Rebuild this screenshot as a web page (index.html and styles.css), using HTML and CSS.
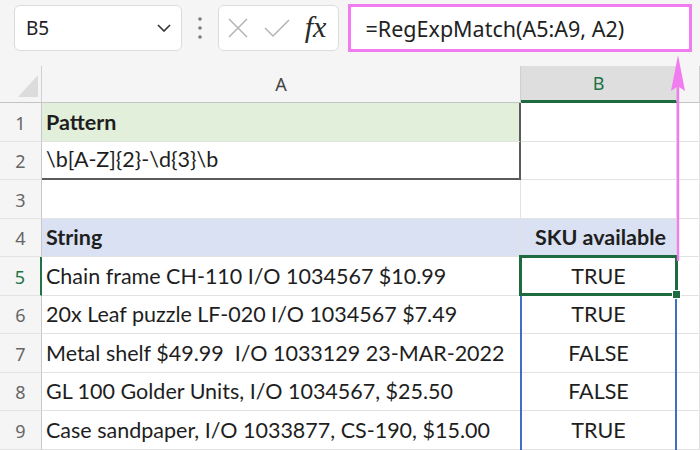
FILE: index.html
```html
<!DOCTYPE html>
<html lang="en">
<head>
  <meta charset="UTF-8">
  <title>RegExpMatch</title>
  <link rel="stylesheet" href="styles.css">
</head>
<body>
  <div class="toolbar">
    <div class="namebox">
      <span>B5</span>
      <svg class="chev" width="14" height="8" viewBox="0 0 14 8"><path d="M1 1 L7 7 L13 1" fill="none" stroke="#333" stroke-width="1.6"/></svg>
    </div>
    <svg class="dots" width="6" height="24" viewBox="0 0 6 24"><circle cx="3" cy="3" r="1.8" fill="#7a7a7a"/><circle cx="3" cy="12" r="1.8" fill="#7a7a7a"/><circle cx="3" cy="21" r="1.8" fill="#7a7a7a"/></svg>
    <div class="fxbox">
      <svg width="22" height="22" viewBox="0 0 22 22"><path d="M2 2 L20 20 M20 2 L2 20" stroke="#b4b4b4" stroke-width="1.5" fill="none"/></svg>
      <svg width="28" height="22" viewBox="0 0 28 22"><path d="M2 11 L10 19 L26 3" stroke="#b4b4b4" stroke-width="1.5" fill="none"/></svg>
      <span class="fx">fx</span>
    </div>
    <div class="formula">=RegExpMatch(A5:A9, A2)</div>
  </div>

  <div class="sheet">
    <div class="corner"><div class="tri"></div></div>
    <div class="colhead">A</div>
    <div class="colhead sel">B</div>
    <div class="colhead"></div>

    <div class="rowhead">1</div>
    <div class="cell green bold boxr">Pattern</div>
    <div class="cell"></div>
    <div class="cell"></div>

    <div class="rowhead">2</div>
    <div class="cell boxr boxb">\b[A-Z]{2}-\d{3}\b</div>
    <div class="cell"></div>
    <div class="cell"></div>

    <div class="rowhead">3</div>
    <div class="cell"></div>
    <div class="cell"></div>
    <div class="cell"></div>

    <div class="rowhead">4</div>
    <div class="cell blue bold">String</div>
    <div class="cell blue bold right">SKU available</div>
    <div class="cell"></div>

    <div class="rowhead active">5</div>
    <div class="cell">Chain frame CH-110 I/O 1034567 $10.99</div>
    <div class="cell center anchor">
      TRUE
      <div class="spill"></div>
      <div class="current"></div>
    </div>
    <div class="cell"></div>

    <div class="rowhead">6</div>
    <div class="cell">20x Leaf puzzle LF-020 I/O 1034567 $7.49</div>
    <div class="cell center">TRUE</div>
    <div class="cell"></div>

    <div class="rowhead">7</div>
    <div class="cell">Metal shelf $49.99&nbsp; I/O 1033129 23-MAR-2022</div>
    <div class="cell center">FALSE</div>
    <div class="cell"></div>

    <div class="rowhead">8</div>
    <div class="cell">GL 100 Golder Units, I/O 1034567, $25.50</div>
    <div class="cell center">FALSE</div>
    <div class="cell"></div>

    <div class="rowhead">9</div>
    <div class="cell">Case sandpaper, I/O 1033877, CS-190, $15.00</div>
    <div class="cell center">TRUE</div>
    <div class="cell"></div>
  </div>

  <svg class="arrow" width="20" height="206" viewBox="0 0 20 206">
    <path d="M10 0 L17 36 L11.2 32 L11.2 206 L8.8 206 L8.8 32 L3 36 Z" fill="#f07cf0"/>
  </svg>
</body>
</html>
```

FILE: styles.css
```css
body {
  margin: 0;
  width: 700px;
  height: 450px;
  overflow: hidden;
  background-color: #f5f5f5;
  font-family: Lato, 'Noto Sans', sans-serif;
  color: #1e1e1e;
  position: relative;
}

/* formula bar */
.toolbar {
  height: 66px;
  display: flex;
  align-items: flex-start;
  padding: 5px 8px 0 14px;
  box-sizing: border-box;
}
.namebox {
  width: 168px;
  height: 46px;
  box-sizing: border-box;
  background: white;
  border: 1px solid #dcdcdc;
  border-radius: 6px;
  display: flex;
  align-items: center;
  justify-content: space-between;
  padding: 0 10px 0 11px;
  font-family: 'Noto Sans', sans-serif;
  font-size: 19px;
  color: #222;
}
.dots {
  margin: 11px 15px 0 15px;
}
.fxbox {
  width: 121px;
  height: 46px;
  box-sizing: border-box;
  background: white;
  border: 1px solid #dcdcdc;
  border-radius: 6px;
  display: flex;
  align-items: center;
  gap: 14px;
  padding-left: 8px;
}
.fx {
  font-family: 'Liberation Serif', serif;
  font-style: italic;
  font-size: 30px;
  color: #2a2a2a;
  margin-left: 0;
  margin-top: -2px;
}
.formula {
  margin-left: 9px;
  margin-top: -1px;
  width: 345px;
  height: 48px;
  box-sizing: border-box;
  background: white;
  border: 3px solid #f07cf0;
  display: flex;
  align-items: center;
  padding-left: 15px;
  font-family: 'Noto Sans', sans-serif;
  font-size: 21.5px;
  color: #222;
}

/* grid */
.sheet {
  display: grid;
  grid-template-columns: 42px 479px 156px 1fr;
  grid-template-rows: 37px repeat(9, 38.5px);
  background: white;
}
.corner {
  background: #f5f5f5;
  border-right: 1px solid #d0d0d0;
  border-bottom: 1px solid #c4c4c4;
  display: flex;
  justify-content: flex-end;
  align-items: flex-end;
  padding: 0 3px 5px 0;
}
.tri {
  width: 0;
  height: 0;
  border-left: 20px solid transparent;
  border-bottom: 22px solid #dcdcdc;
}
.colhead {
  background: #f5f5f5;
  border-right: 1px solid #d0d0d0;
  border-bottom: 1px solid #c4c4c4;
  display: flex;
  align-items: center;
  justify-content: center;
  font-family: 'Noto Sans', sans-serif;
  font-size: 18px;
  color: #444;
}
.colhead.sel {
  background: #dedede;
  color: #217346;
  border-bottom: 3px solid #1d6b3e;
}
.rowhead {
  background: #f5f5f5;
  border-right: 1px solid #c8c8c8;
  border-bottom: 1px solid #e2e2e2;
  display: flex;
  align-items: flex-end;
  justify-content: center;
  padding-bottom: 6px;
  box-sizing: border-box;
  font-family: 'Noto Sans', sans-serif;
  font-size: 18px;
  color: #666;
}
.rowhead.active {
  color: #217346;
  border-right: 2px solid #217346;
}
.cell {
  border-right: 1px solid #e2e2e2;
  border-bottom: 1px solid #e2e2e2;
  display: flex;
  align-items: flex-end;
  padding: 0 4px 6px 4px;
  box-sizing: border-box;
  font-size: 21.5px;
  white-space: nowrap;
}
.bold { font-weight: bold; }
.right { justify-content: flex-end; padding-right: 10px; }
.center { justify-content: center; }
.green { background: #e2efda; }
.blue { background: #d9e1f2; }
.boxr { border-right: 2px solid #5b5b5b; }
.boxb { border-bottom: 2px solid #5b5b5b; }

/* selection overlays on B5 */
.anchor {
  position: relative;
}
.spill {
  position: absolute;
  left: -1px;
  right: -1px;
  top: -1px;
  height: 193px;
  border: 2px solid #3f6fc4;
  z-index: 1;
}
.current {
  position: absolute;
  left: -2px;
  right: -2px;
  top: -2px;
  bottom: -1px;
  border: 3px solid #1d6b3e;
  z-index: 2;
}
.current::after {
  content: '';
  position: absolute;
  right: -6px;
  bottom: -6px;
  width: 7px;
  height: 7px;
  background: #1d6b3e;
  border: 1px solid white;
}
.arrow {
  position: absolute;
  left: 668px;
  top: 55px;
  z-index: 3;
}
```
